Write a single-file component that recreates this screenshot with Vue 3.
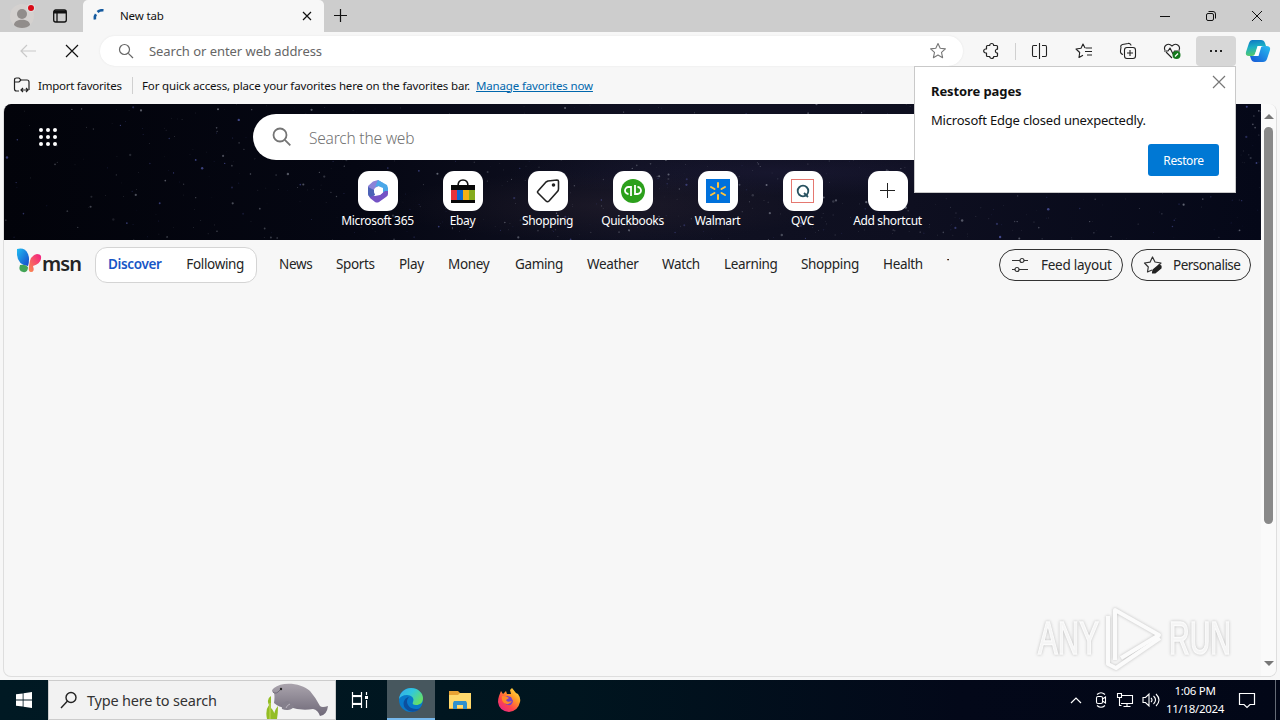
<script setup>
import { ref } from 'vue';

const shortcuts = ref([
    { id: 'm365', label: 'Microsoft 365' },
    { id: 'ebay', label: 'Ebay' },
    { id: 'tag', label: 'Shopping' },
    { id: 'qb', label: 'Quickbooks' },
    { id: 'walmart', label: 'Walmart' },
    { id: 'qvc', label: 'QVC' },
    { id: 'add', label: 'Add shortcut' },
]);

// column widths keep the categories evenly spaced
const categories = ref([
    { name: 'News', width: 33 },
    { name: 'Sports', width: 39 },
    { name: 'Play', width: 25 },
    { name: 'Money', width: 43 },
    { name: 'Gaming', width: 48 },
    { name: 'Weather', width: 51 },
    { name: 'Watch', width: 38 },
    { name: 'Learning', width: 53 },
    { name: 'Shopping', width: 58 },
    { name: 'Health', width: 40 },
]);

// small seeded generator so the sky is the same on every load
let seed = 41;
const rand = () => {
    seed = (seed * 16807) % 2147483647;
    return seed / 2147483647;
};
const stars = Array.from({ length: 900 }, () => {
    const x = Math.pow(rand(), 0.75) * 1257;
    return {
        x,
        y: rand() * 136,
        r: 0.35 + Math.pow(rand(), 3) * 0.9,
        o: 0.14 + rand() * 0.42,
        c: rand() > 0.7 ? '#6f78e0' : '#a9adba',
    };
});
</script>

<template>
    <div class="desktop">
        <header class="titlebar">
            <div class="tab-tools">
                <svg class="avatar" width="28" height="28" viewBox="0 0 28 28">
                    <circle cx="14" cy="14" r="12" fill="#d4d1cf" />
                    <circle cx="14" cy="12" r="5" fill="#918d8b" />
                    <path d="M6 23c0-7 16-7 16 0-3 4-13 4-16 0z" fill="#918d8b" />
                    <circle cx="23" cy="6" r="4" fill="#dedede" />
                    <circle cx="23" cy="6" r="3" fill="#d90b17" />
                </svg>
                <svg width="16" height="16" viewBox="0 0 16 16" fill="none" stroke="#111" stroke-width="1.3">
                    <rect x="1.7" y="2" width="12.6" height="12" rx="2" />
                    <path d="M2 4h12" stroke-width="3" />
                    <path d="M5 5v9" />
                </svg>
            </div>
            <div class="tab">
                <svg width="14" height="14" viewBox="0 0 14 14" fill="none" stroke="#155a9f" stroke-width="2.6">
                    <path d="M2 10.500C1.600 8.500 2 6.500 3 5.200" />
                    <path d="M4.500 3C6 1.600 8 1 10.500 1.200" />
                </svg>
                <span class="tab-title">New tab</span>
                <svg width="10" height="10" viewBox="0 0 10 10" stroke="#111" stroke-width="1.2">
                    <path d="M1 1l8 8M9 1l-8 8" />
                </svg>
            </div>
            <svg class="new-tab" width="14" height="14" viewBox="0 0 14 14" stroke="#111" stroke-width="1.2">
                <path d="M6.500 0v13M0 6.500h13" />
            </svg>
            <div class="window-controls">
                <svg width="12" height="12" viewBox="0 0 12 12" stroke="#111"><path d="M1 6.5h10" /></svg>
                <svg width="12" height="12" viewBox="0 0 12 12" fill="none" stroke="#111">
                    <rect x="1.5" y="3.5" width="7" height="7" rx="1.5" />
                    <path d="M3.5 1.5H8q2.5 0 2.5 2.5v4.5" />
                </svg>
                <svg width="12" height="12" viewBox="0 0 12 12" stroke="#111"><path d="M1 1l10 10M11 1L1 11" /></svg>
            </div>
        </header>

        <div class="toolbar">
            <svg class="back" width="18" height="16" viewBox="0 0 18 16" fill="none" stroke="#c9c9c9" stroke-width="1.2">
                <path d="M17 8H2M8 2L2 8l6 6" />
            </svg>
            <svg class="stop" width="14" height="14" viewBox="0 0 14 14" stroke="#111" stroke-width="1.2">
                <path d="M1 1l12 12M13 1L1 13" />
            </svg>
            <div class="address">
                <svg width="16" height="16" viewBox="0 0 16 16" fill="none" stroke="#666" stroke-width="1.2">
                    <circle cx="6.5" cy="6.5" r="5" />
                    <path d="M10.3 10.3L15 15" />
                </svg>
                <span>Search or enter web address</span>
                <svg width="18" height="18" viewBox="0 0 18 18" fill="none" stroke="#777" stroke-width="1.1" stroke-linejoin="round">
                    <path d="M9 1.5l2.2 4.8 5.2.6-3.900 3.500 1.100 5.300L9 13.100l-4.600 2.600 1.100-5.300L1.600 6.900l5.200-.6z" />
                </svg>
            </div>
            <div class="tools">
                <svg width="18" height="18" viewBox="0 0 18 18" fill="none" stroke="#222" stroke-width="1.2" stroke-linejoin="round">
                    <path d="M5.500 3.500h2.200a2 2 0 0 1 4 0h2.800q1 0 1 1v2.700h-.8a2 2 0 0 0 0 3.800h.8v2.500q0 1-1 1h-2.800a2 2 0 0 1-4 0H5.500q-1 0-1-1V11h-.8a2 2 0 0 1 0-4h.8V4.500q0-1 1-1z" />
                </svg>
                <i class="divider"></i>
                <svg width="18" height="18" viewBox="0 0 18 18" fill="none" stroke="#222" stroke-width="1.1">
                    <path d="M6 3.500H2.500Q1.500 3.500 1.500 5v8q0 1.500 1 1.500H6M11 3.500h3.500q1 0 1 1.500v8q0 1.500-1 1.500H11M8.500 1v16" />
                </svg>
                <svg width="18" height="18" viewBox="0 0 18 18" fill="none" stroke="#222" stroke-width="1.1" stroke-linejoin="round">
                    <path d="M10 6L8 2 6 6.300l-5 .7L4.700 10.500 4 15.500l4-2.200M10.500 6H17M10 9.500h7M12 13h5" />
                </svg>
                <svg width="18" height="18" viewBox="0 0 18 18" fill="none" stroke="#222" stroke-width="1.1">
                    <rect x="5.500" y="5.500" width="11" height="11" rx="2.500" />
                    <path d="M11 8v6M8 11h6M4 12.500C2 12 1.300 10 1.500 8.500L2 5M12 3.500C12 1.500 10 1.200 9 1.500L3.500 2.500Q1.500 3 1.700 5" />
                </svg>
                <svg width="18" height="18" viewBox="0 0 18 18" fill="none" stroke="#222" stroke-width="1.1" stroke-linejoin="round">
                    <path d="M2 8C0 4 5 0 9 4c4-4 9 0 7 4M3 10l6 6" />
                    <path d="M1 9h4l2-3 3 6 1.500-3H17" />
                    <circle cx="13.500" cy="13" r="4" fill="#14791d" stroke="none" />
                    <path d="M12 14.500l3-3" stroke="#fff" stroke-width="1.3" />
                </svg>
                <div class="more"><b></b><b></b><b></b></div>
                <svg class="copilot" width="26" height="24" viewBox="0 0 26 24">
                    <defs>
                        <linearGradient id="cpa" x1="0" y1="0" x2="0.2" y2="1">
                            <stop offset="0" stop-color="#0b72c4" />
                            <stop offset=".5" stop-color="#1bb0c4" />
                            <stop offset="1" stop-color="#55c96c" />
                        </linearGradient>
                        <linearGradient id="cpb" x1="1" y1="0" x2="0" y2="1">
                            <stop offset="0" stop-color="#28bff0" />
                            <stop offset="1" stop-color="#1554d5" />
                        </linearGradient>
                    </defs>
                    <path d="M7 1h9q3 0 4 3l1 3h-6q-2 0-3 3l-2 5q-1 2-3 2H4q-4 0-3-4L4 4q1-3 3-3z" fill="url(#cpa)" />
                    <path d="M19 7h2q5 0 4 4l-3 9q-1 3-4 3h-8q-3 0-4-3l-1-3h5q2 0 3-3l2-5q1-2 4-2z" fill="url(#cpb)" />
                    <path d="M12.500 7h4l-3 10H9.500z" fill="#fff" />
                </svg>
            </div>
        </div>

        <div class="favorites">
            <svg width="18" height="18" viewBox="0 0 18 18" fill="none" stroke="#222" stroke-width="1.2">
                <path d="M6 15H3.500Q1.500 15 1.500 13V4Q1.500 2 3.500 2H6l2 2h6q2 0 2 2v8M1.500 6H6l2-2" />
                <path d="M8 14h7M10 12l-2 2 2 2M13 12l2 2-2 2" />
            </svg>
            <span class="import">Import favorites</span>
            <i class="divider"></i>
            <span class="hint">For quick access, place your favorites here on the favorites bar.</span>
            <a class="manage">Manage favorites now</a>
        </div>

        <main class="page">
            <div class="page-body">
                <section class="hero">
                    <svg class="sky" width="1257" height="136" viewBox="0 0 1257 136">
                        <circle v-for="(s, i) in stars" :key="i" :cx="s.x" :cy="s.y" :r="s.r" :fill="s.c" :opacity="s.o" />
                    </svg>
                    <div class="search-row">
                        <svg class="waffle" width="20" height="20" viewBox="0 0 20 20" fill="#fff">
                            <template v-for="r in 3" :key="r">
                                <circle v-for="c in 3" :key="c" :cx="c * 7 - 4" :cy="r * 7 - 4" r="2" />
                            </template>
                        </svg>
                        <div class="web-search">
                            <svg width="20" height="20" viewBox="0 0 20 20" fill="none" stroke="#757575" stroke-width="1.8">
                                <circle cx="8" cy="8" r="6.500" />
                                <path d="M12.800 12.800l5.500 5.500" />
                            </svg>
                            <span>Search the web</span>
                        </div>
                    </div>
                    <div class="shortcuts">
                        <div v-for="s in shortcuts" :key="s.id" class="shortcut">
                            <div class="tile">
                                <svg v-if="s.id === 'm365'" width="24" height="24" viewBox="0 0 24 24">
                                    <path d="M7 2.500L12 1l5 3-6 4-3 3v6l-5-1-1-4V7z" fill="#8b83d8" />
                                    <path d="M12 1l9 5 1 3v5l-5 2V9l-5-2-3 1z" fill="#4ba7e8" />
                                    <path d="M22 12v3q0 2-2 3l-7 5q-2 1-4 0l-5-4-2-4 7 2 5-1 5-4z" fill="#7453c5" />
                                    <path d="M2 8v7q0 2 2 3l5-2-1-5z" fill="#4b62b6" />
                                    <circle cx="12" cy="12" r="4" fill="#fff" />
                                </svg>
                                <svg v-else-if="s.id === 'ebay'" width="24" height="26" viewBox="0 0 24 26">
                                    <path d="M7 8Q7 2 12 2t5 6" fill="none" stroke="#111" stroke-width="1.6" />
                                    <path d="M0 7h24v18H0z" fill="#080808" />
                                    <path d="M0 12h6v10H0z" fill="#e53238" />
                                    <path d="M6 12h6v10H6z" fill="#0968d2" />
                                    <path d="M12 12h6v10h-6z" fill="#f2b114" />
                                    <path d="M18 12h6v10h-6z" fill="#85ac1c" />
                                </svg>
                                <svg v-else-if="s.id === 'tag'" width="24" height="24" viewBox="0 0 24 24" fill="none" stroke="#222" stroke-width="1.6" stroke-linejoin="round">
                                    <path d="M12 2l9-1q1.500 0 1.500 1.500V10q0 2-1.500 3l-8 9q-1.500 1.500-3 0l-8-8q-1-1 0-2l8-9z" />
                                    <circle cx="17.500" cy="6" r="1" fill="#222" />
                                </svg>
                                <svg v-else-if="s.id === 'qb'" width="24" height="24" viewBox="0 0 24 24" fill="none" stroke="#fff" stroke-width="1.8">
                                    <circle cx="12" cy="12" r="12" fill="#2ca01c" stroke="none" />
                                    <path d="M10 17V8H7.500a3.500 3.500 0 0 0 0 7M14 6v9h2.500a3.500 3.500 0 0 0 0-7" />
                                </svg>
                                <svg v-else-if="s.id === 'walmart'" width="24" height="24" viewBox="0 0 24 24">
                                    <path d="M0 0h24v24H0z" fill="#0071dc" />
                                    <path d="M12 4v4M12 16v4M5 8l3.500 2M15.500 14l3.500 2M5 16l3.500-2M15.500 10L19 8" stroke="#ffc43b" stroke-width="2" stroke-linecap="round" />
                                </svg>
                                <svg v-else-if="s.id === 'qvc'" width="24" height="24" viewBox="0 0 24 24" fill="none">
                                    <rect x=".5" y=".5" width="22" height="23" stroke="#e57870" />
                                    <circle cx="12" cy="12" r="5.300" stroke="#285260" stroke-width="1.8" />
                                    <path d="M13 14l4 4" stroke="#285260" stroke-width="1.8" />
                                </svg>
                                <svg v-else width="16" height="16" viewBox="0 0 16 16" stroke="#222"><path d="M7.500 0v15M0 7.500h15" /></svg>
                            </div>
                            <span>{{ s.label }}</span>
                        </div>
                    </div>
                </section>

                <nav class="feed-nav">
                    <div class="msn">
                        <svg width="26" height="26" viewBox="0 0 26 26">
                            <defs>
                                <linearGradient id="wing" x1="0" y1="0" x2="1" y2="1">
                                    <stop offset="0" stop-color="#20bdf2" />
                                    <stop offset="1" stop-color="#1647c9" />
                                </linearGradient>
                                <linearGradient id="wing2" x1="1" y1="0" x2="0" y2="1">
                                    <stop offset="0" stop-color="#f21c83" />
                                    <stop offset="1" stop-color="#fb8d4f" />
                                </linearGradient>
                            </defs>
                            <path d="M1 1q8-2 11 5 2 5 0 12Q2 17 1 7z" fill="url(#wing)" />
                            <path d="M4 17q5-1 8 2 0 6-5 5-5-1-3-7z" fill="#43a457" />
                            <path d="M13 18q1-11 8-12 5 0 4 5-1 5-8 7 2 6-2 6-3 0-2-6z" fill="url(#wing2)" />
                        </svg>
                        <b>msn</b>
                    </div>
                    <div class="switcher">
                        <span class="active">Discover</span>
                        <span>Following</span>
                    </div>
                    <div class="categories">
                        <span v-for="c in categories" :key="c.name" :style="{ width: `${c.width}px` }">{{ c.name }}</span>
                        <span class="cut">T</span>
                    </div>
                    <button class="pill feed">
                        <svg width="18" height="18" viewBox="0 0 18 18" fill="none" stroke="#333" stroke-width="1.2">
                            <path d="M1 4.500h8M13 4.500h4M1 13.500h3M8 13.500h9" />
                            <circle cx="11" cy="4.500" r="2" />
                            <circle cx="6" cy="13.500" r="2" />
                        </svg>
                        <span>Feed layout</span>
                    </button>
                    <button class="pill personal">
                        <svg width="20" height="20" viewBox="0 0 20 20" fill="none" stroke="#333" stroke-width="1.2" stroke-linejoin="round">
                            <path d="M9 15l-4.500 2 .8-5L1.500 8l5.500-.8L9.500 2 12 7l6 1-3 3" />
                            <path d="M10 15l6-5 2 1v2l-6 5H9.500z" fill="#222" stroke="#222" />
                        </svg>
                        <span>Personalise</span>
                    </button>
                </nav>

                <svg class="watermark" width="208" height="72" viewBox="0 0 208 72">
                    <g fill="none" stroke-width="4" stroke-linejoin="round">
                        <path d="M84 56V6l44 25-38 23" />
                        <path d="M77 12v48l8 4 44-30" />
                    </g>
                    <text x="7" y="50" textLength="61" lengthAdjust="spacingAndGlyphs">ANY</text>
                    <text x="138" y="50" textLength="62" lengthAdjust="spacingAndGlyphs">RUN</text>
                </svg>
            </div>
            <div class="scrollbar">
                <i class="up"></i>
                <div class="track"><div class="thumb"></div></div>
                <i class="down"></i>
            </div>
        </main>

        <aside class="restore">
            <svg class="dismiss" width="14" height="14" viewBox="0 0 14 14" stroke="#777" stroke-width="1.2"><path d="M1 1l12 12M13 1L1 13" /></svg>
            <h2>Restore pages</h2>
            <p>Microsoft Edge closed unexpectedly.</p>
            <button>Restore</button>
        </aside>

        <footer class="taskbar">
            <div class="start">
                <svg width="16" height="16" viewBox="0 0 16 16" fill="#fff">
                    <path d="M0 2.300l6.700-.9v6.200H0zM7.500 1.300L16 0v7.600H7.500zM0 8.400h6.700v6.200L0 13.700zM7.500 8.400H16V16l-8.500-1.200z" />
                </svg>
            </div>
            <div class="task-search">
                <svg width="18" height="18" viewBox="0 0 18 18" fill="none" stroke="#222" stroke-width="1.4">
                    <circle cx="11" cy="6.500" r="5" />
                    <path d="M7.500 10L1 17" />
                </svg>
                <span>Type here to search</span>
                <svg class="manatee" width="66" height="38" viewBox="0 0 66 38">
                    <defs>
                        <linearGradient id="skin" x1="0" y1="0" x2="0" y2="1">
                            <stop offset="0" stop-color="#aaa4ad" />
                            <stop offset="1" stop-color="#6f6978" />
                        </linearGradient>
                    </defs>
                    <path d="M8 7C16 0 36 2 44 10q6 7 10 15 2 2 8 0-1 9-8 10-2-6-7-7-12 2-24-2-8 2-15-4 1-7 0-10-4-2 0-5z" fill="url(#skin)" />
                    <path d="M22 20c-4 0-7 4-6 8 4 2 11 1 12-3z" fill="#85808c" />
                    <path d="M24 23q-3 1-4 4" stroke="#b9b3bd" fill="none" />
                    <path d="M7 11q3 3 7-2" stroke="#716b78" fill="none" />
                    <circle cx="15" cy="8" r="1.2" fill="#222" />
                    <path d="M1 38Q-1 29 3 24q-3-6 2-9 0 7 0 12 5 5 3 11zM8 38q-1-7 4-13 0 7-1 13z" fill="#93bd24" />
                    <path d="M4 38V22" stroke="#c4da57" />
                </svg>
            </div>
            <div class="task task-view">
                <svg width="18" height="18" viewBox="0 0 18 18" fill="none" stroke="#fff" stroke-width="1.2">
                    <path d="M1.500 1v3.500h9V1M1.500 17v-3.500h9V17" />
                    <rect x="1.500" y="5.500" width="9" height="7" />
                    <path d="M15.500 1v3M15.500 9v8" />
                    <path d="M14 5h3v3h-3z" fill="#fff" stroke="none" />
                </svg>
            </div>
            <div class="task running">
                <svg width="24" height="24" viewBox="0 0 24 24">
                    <defs>
                        <linearGradient id="edge-top" x1="0" y1="0" x2="1" y2=".6">
                            <stop offset="0" stop-color="#36a8ed" />
                            <stop offset=".5" stop-color="#31c7dc" />
                            <stop offset="1" stop-color="#66df66" />
                        </linearGradient>
                    </defs>
                    <circle cx="12" cy="12" r="12" fill="#0879c9" />
                    <path d="M0 11C1 4 6 0 12 0c7 0 12 5 12 10 0 5-3 7-7 7-3 0-4-1-3-3 2-4-2-7-6-7-4 0-7 2-8 4z" fill="url(#edge-top)" />
                    <path d="M10 9c-5 5 0 13 8 12 2 0 3-1 4-2-3 6-12 6-16 1C3 16 5 10 10 9z" fill="#0c4f9e" />
                </svg>
            </div>
            <div class="task">
                <svg width="22" height="18" viewBox="0 0 22 18">
                    <path d="M0 0h9l2 2h11v16H0z" fill="#e8a334" />
                    <path d="M0 4h9l2-2h11v15H0z" fill="#ffd96c" />
                    <path d="M4 18v-6l1-2h12l1 2v6h-4v-4H8v4z" fill="#2f90cd" />
                </svg>
            </div>
            <div class="task">
                <svg width="24" height="24" viewBox="0 0 24 24">
                    <defs>
                        <linearGradient id="fox" x1="1" y1="0" x2=".2" y2="1">
                            <stop offset="0" stop-color="#fff44a" />
                            <stop offset=".4" stop-color="#ff9827" />
                            <stop offset=".7" stop-color="#ff454b" />
                            <stop offset="1" stop-color="#e72786" />
                        </linearGradient>
                    </defs>
                    <path d="M2 8l2-5 2 3 3-3 1 3 4 0-1-4 2-2 4 5 2 1q3 4 2 8-2 9-11 10Q2 23 1 14q0-3 1-6z" fill="url(#fox)" />
                    <path d="M7 9q2 0 3-1l4 1 2 4q-1 5-5 4-5-1-4-8z" fill="#7542c8" />
                    <path d="M5 8q5 0 7 2l-3 2q1 3 6 1-3 5-8 2-3-2-2-7z" fill="#ff8b26" />
                </svg>
            </div>
            <div class="tray">
                <svg width="12" height="8" viewBox="0 0 12 8" fill="none" stroke="#fff" stroke-width="1.2"><path d="M1 7l5-5 5 5" /></svg>
                <svg width="14" height="18" viewBox="0 0 14 18" fill="none" stroke="#fff" stroke-width="1.1">
                    <rect x="2.500" y="5.500" width="6" height="7" rx="1.500" />
                    <path d="M8.500 8l3-2v6l-3-2M3 3.500Q7 0 11 3.500M3 14.500q4 3.500 8 0" />
                </svg>
                <svg width="18" height="16" viewBox="0 0 18 16" fill="none" stroke="#fff" stroke-width="1.1">
                    <path d="M6 3.500h10.500v8H5M11 11.500v3M7.500 14.500h7M1.500 1.500h4v4h-4zM3.500 5.500v8h2" />
                </svg>
                <svg width="18" height="16" viewBox="0 0 18 16" fill="none" stroke="#fff" stroke-width="1.1">
                    <path d="M1 5.500h2.500L7 2v12l-3.500-3.500H1zM9 6q2 2 0 4M11.500 4q4 4 0 8M14 2q6 6 0 12" />
                </svg>
                <div class="clock"><span>1:06 PM</span><span>11/18/2024</span></div>
                <svg class="notice" width="18" height="18" viewBox="0 0 18 18" fill="none" stroke="#fff" stroke-width="1.2">
                    <path d="M1.500 2.500h15v11H12L9 16.500l-3-3H1.500z" />
                </svg>
                <i class="peek"></i>
            </div>
        </footer>
    </div>
</template>

<style>
body {
    margin: 0;
    overflow: hidden;
}
</style>

<style scoped>
.desktop {
    position: relative;
    display: flex;
    flex-direction: column;
    width: 1280px;
    height: 720px;
    overflow: hidden;
    background: #f7f7f7;
    color: #111;
    font-family: "Noto Sans", "Open Sans", sans-serif;
    font-size: 12px;
    white-space: nowrap;
}

svg {
    display: block;
    flex: none;
}

button {
    font-family: inherit;
    cursor: pointer;
}

.titlebar {
    display: flex;
    height: 32px;
    background: #cdcdcd;
}

.tab-tools {
    display: flex;
    align-items: center;
    gap: 16px;
    box-sizing: border-box;
    width: 83px;
    padding-left: 8px;
}

.tab {
    display: flex;
    align-items: center;
    box-sizing: border-box;
    width: 241px;
    padding: 0 12px 0 10px;
    background: #f7f7f7;
    border-radius: 5px 5px 0 0;
}

.tab-title {
    flex: 1;
    margin-left: 13px;
    padding-bottom: 2px;
    font-size: 11.5px;
    letter-spacing: -0.15px;
}

.new-tab {
    margin: 9px 0 0 10px;
}

.window-controls {
    display: grid;
    grid-template-columns: repeat(3, 46px);
    place-items: center;
    margin-left: auto;
}

.toolbar {
    display: flex;
    align-items: center;
    height: 38px;
}

.back {
    margin-left: 19px;
}

.stop {
    margin-left: 28px;
}

.address {
    display: flex;
    align-items: center;
    box-sizing: border-box;
    width: 863px;
    height: 30px;
    margin-left: 21px;
    padding: 0 16px 0 18px;
    border-radius: 15px;
    background: #fff;
    box-shadow: 0 0 2px #e3e3e3;
    color: #666;
    font-size: 13px;
}

.address span {
    flex: 1;
    margin-left: 15px;
    letter-spacing: -0.05px;
}

.tools {
    display: flex;
    align-items: center;
    margin-left: 19px;
    gap: 26px;
}

.divider {
    width: 1px;
    height: 17px;
    background: #d0d0d0;
}

.tools .divider {
    margin: 0 -11px;
}

.more {
    display: flex;
    align-items: center;
    justify-content: center;
    gap: 3px;
    width: 40px;
    height: 30px;
    margin-left: -11px;
    border-radius: 4px;
    background: #d7d7d7;
}

.more b {
    width: 2px;
    height: 2px;
    background: #222;
}

.copilot {
    margin-left: -17px;
}

.favorites {
    display: flex;
    align-items: center;
    box-sizing: border-box;
    height: 32px;
    padding: 0 0 2px 13px;
    font-size: 11.5px;
}

.import {
    width: 84px;
    margin-left: 7px;
    letter-spacing: -0.25px;
}

.favorites .divider {
    margin: 0 9px 0 10px;
}

.hint {
    width: 334px;
    letter-spacing: -0.15px;
}

.manage {
    color: #0067ad;
    text-decoration: underline;
    letter-spacing: -0.15px;
}

.page {
    display: flex;
    box-sizing: border-box;
    width: 1274px;
    height: 573px;
    margin: 2px 0 0 3px;
    border: 1px solid #dedede;
    border-top: 0;
    border-radius: 8px;
    overflow: hidden;
    background: #f7f7f7;
}

.page-body {
    position: relative;
    width: 1257px;
}

.hero {
    position: relative;
    height: 136px;
    background:
        radial-gradient(ellipse at 48% 75%, rgba(55, 43, 53, 0.3), transparent 24%),
        radial-gradient(ellipse at 62% 50%, rgba(38, 34, 70, 0.35), transparent 25%),
        linear-gradient(90deg, #02030a, #050713 28%, #101122 50%, #0e0f20 72%, #050818);
}

.sky {
    position: absolute;
    left: 0;
    top: 0;
}

.search-row {
    position: relative;
    display: flex;
    align-items: center;
    height: 46px;
    padding: 10px 0 11px 34px;
}

.web-search {
    display: flex;
    align-items: center;
    box-sizing: border-box;
    width: 755px;
    height: 46px;
    margin-left: 195px;
    padding-left: 19px;
    border-radius: 23px;
    background: #fff;
    color: #737373;
    font-size: 15.5px;
    font-weight: 300;
}

.web-search span {
    margin-left: 17px;
    padding-top: 1px;
    letter-spacing: -0.2px;
}

.shortcuts {
    position: relative;
    display: grid;
    grid-template-columns: repeat(7, 85px);
    justify-content: center;
}

.shortcut {
    display: flex;
    flex-direction: column;
    align-items: center;
    color: #fff;
    letter-spacing: -0.35px;
    line-height: 19px;
}

.tile {
    display: flex;
    align-items: center;
    justify-content: center;
    width: 40px;
    height: 40px;
    border-radius: 11px;
    background: #fff;
}

.feed-nav {
    display: flex;
    align-items: center;
    height: 50px;
    color: #242424;
    font-size: 13.5px;
}

.msn {
    display: flex;
    width: 91px;
    box-sizing: border-box;
    padding: 0 0 3px 12px;
}

.msn b {
    font-size: 20px;
    font-weight: 600;
    line-height: 31px;
    letter-spacing: -0.9px;
}

.switcher {
    display: flex;
    align-items: center;
    justify-content: space-between;
    box-sizing: border-box;
    width: 162px;
    height: 36px;
    padding: 0 12px 2px;
    border: 1px solid #d4d4d4;
    border-radius: 12px;
    background: #fff;
    letter-spacing: -0.35px;
}

.active {
    color: #1756c6;
    font-weight: 600;
}

.categories {
    display: flex;
    gap: 24px;
    width: 720px;
    margin-left: 22px;
    padding-bottom: 2px;
    letter-spacing: -0.35px;
}

.categories .cut {
    width: 2px;
    overflow: hidden;
}

.pill {
    display: flex;
    align-items: center;
    box-sizing: border-box;
    height: 32px;
    padding: 0 0 0 11px;
    border: 1px solid #333;
    border-radius: 16px;
    background: transparent;
    color: #242424;
    font-size: 13.5px;
    letter-spacing: -0.25px;
}

.feed {
    width: 124px;
}

.feed span {
    margin-left: 12px;
}

.personal {
    width: 120px;
    margin-left: 8px;
    letter-spacing: -0.5px;
}

.personal span {
    margin-left: 10px;
}

.watermark {
    position: absolute;
    right: 22px;
    bottom: 0;
    overflow: visible;
    stroke: #fcfcfc;
    filter: drop-shadow(0 0 1.5px #aaa);
    opacity: 0.75;
}

.watermark text {
    font-family: "Liberation Sans", sans-serif;
    font-size: 46px;
    fill: #f4f4f4;
    stroke-width: 1.5px;
}

.scrollbar {
    display: flex;
    flex-direction: column;
    align-items: center;
    width: 15px;
    background: #fafafa;
}

.up {
    margin-top: 10px;
    border: 5px solid transparent;
    border-top: 0;
    border-bottom-color: #777;
}

.track {
    flex: 1;
    padding-top: 8px;
}

.thumb {
    width: 9px;
    height: 397px;
    border-radius: 5px;
    background: #898989;
}

.down {
    margin-bottom: 10px;
    border: 5px solid transparent;
    border-bottom: 0;
    border-top-color: #777;
}

/* prompt shown over the page below the menu button */
.restore {
    position: absolute;
    left: 914px;
    top: 66px;
    display: flex;
    flex-direction: column;
    box-sizing: border-box;
    width: 322px;
    height: 127px;
    padding: 15px 16px 16px;
    border: 1px solid #c9c9c9;
    background: #fff;
}

.restore h2 {
    margin: 0;
    font-size: 13px;
    font-weight: 700;
    line-height: 19px;
    letter-spacing: -0.1px;
}

.restore p {
    margin: 10px 0;
    font-size: 13px;
    line-height: 19px;
    letter-spacing: -0.2px;
}

.restore button {
    align-self: flex-end;
    width: 71px;
    height: 32px;
    margin-top: 4px;
    padding: 0;
    border: 0;
    border-radius: 3px;
    background: #0078d4;
    color: #fff;
    font-size: 12px;
    letter-spacing: -0.4px;
}

.dismiss {
    position: absolute;
    right: 9px;
    top: 8px;
}

.taskbar {
    display: flex;
    height: 40px;
    margin-top: auto;
    background: linear-gradient(90deg, #001923, #00151f 45%, #030819 75%, #020717);
}

.start,
.task {
    display: flex;
    align-items: center;
    justify-content: center;
    width: 49px;
}

.start {
    width: 48px;
}

.task-search {
    display: flex;
    align-items: center;
    box-sizing: border-box;
    width: 288px;
    padding-left: 11px;
    border: 1px solid #ccc;
    background: #f2f2f2;
    color: #333;
    font-size: 14.5px;
}

.task-search span {
    flex: 1;
    margin-left: 9px;
    letter-spacing: -0.2px;
}

.manatee {
    margin-right: 3px;
}

.task-view {
    box-sizing: border-box;
    width: 51px;
    padding-right: 3px;
}

.running {
    box-sizing: border-box;
    width: 48px;
    padding-top: 2px;
    border-bottom: 2px solid #76b9ed;
    background: #47575e;
}

.tray {
    display: flex;
    align-items: center;
    margin-left: auto;
    gap: 8px;
    color: #fff;
}

.tray svg:first-child {
    margin-right: 4px;
}

.clock {
    display: flex;
    flex-direction: column;
    align-items: center;
    width: 60px;
    margin-left: -3px;
    line-height: 18px;
    font-size: 11.5px;
    letter-spacing: -0.3px;
}

.notice {
    margin-left: 5px;
}

.peek {
    width: 1px;
    height: 40px;
    margin: 0 4px 0 11px;
    background: #656b76;
}
</style>
